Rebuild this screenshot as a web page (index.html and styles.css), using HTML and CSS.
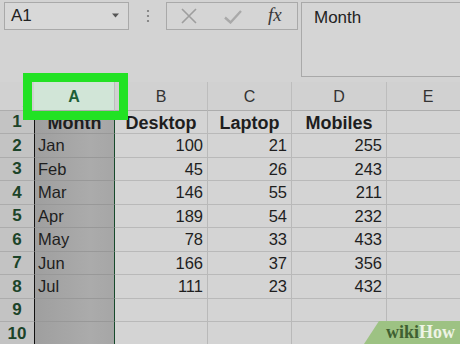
FILE: index.html
```html
<!DOCTYPE html>
<html>
<head>
<meta charset="utf-8">
<link rel="stylesheet" href="styles.css">
</head>
<body>
<div class="app">
  <div class="toolbar">
    <div class="namebox">
      <span class="ref">A1</span>
      <svg class="caret" width="7" height="5" viewBox="0 0 7 5"><path d="M0 0.5 L7 0.5 L3.5 4.5 Z" fill="#555"/></svg>
    </div>
    <div class="dots">
      <svg width="4" height="14" viewBox="0 0 4 14"><circle cx="2" cy="2" r="1.1" fill="#777"/><circle cx="2" cy="7" r="1.1" fill="#777"/><circle cx="2" cy="12" r="1.1" fill="#777"/></svg>
    </div>
    <div class="fxgroup">
      <svg class="ico-x" width="16" height="16" viewBox="0 0 16 16"><path d="M1 1 L15 15 M15 1 L1 15" stroke="#9e9e9e" stroke-width="1.6" fill="none"/></svg>
      <svg class="ico-ok" width="18" height="14" viewBox="0 0 18 14"><path d="M1 7.5 L6.5 12.5 L17 1" stroke="#a9a9a9" stroke-width="2.4" fill="none"/></svg>
      <span class="fx">fx</span>
    </div>
    <div class="formula">Month</div>
  </div>
  <div class="sheet">
    <div class="grid">
      <div class="corner"><span class="tri"></span></div>
      <div class="colh colh-sel">A</div>
      <div class="colh">B</div>
      <div class="colh">C</div>
      <div class="colh">D</div>
      <div class="colh">E</div>

      <div class="rowh">1</div>
      <div class="cell sel active b">Month<span class="handle"></span></div>
      <div class="cell b">Desktop</div>
      <div class="cell b">Laptop</div>
      <div class="cell b">Mobiles</div>
      <div class="cell"></div>

      <div class="rowh">2</div>
      <div class="cell sel">Jan</div>
      <div class="cell n">100</div>
      <div class="cell n">21</div>
      <div class="cell n">255</div>
      <div class="cell"></div>

      <div class="rowh">3</div>
      <div class="cell sel">Feb</div>
      <div class="cell n">45</div>
      <div class="cell n">26</div>
      <div class="cell n">243</div>
      <div class="cell"></div>

      <div class="rowh">4</div>
      <div class="cell sel">Mar</div>
      <div class="cell n">146</div>
      <div class="cell n">55</div>
      <div class="cell n">211</div>
      <div class="cell"></div>

      <div class="rowh">5</div>
      <div class="cell sel">Apr</div>
      <div class="cell n">189</div>
      <div class="cell n">54</div>
      <div class="cell n">232</div>
      <div class="cell"></div>

      <div class="rowh">6</div>
      <div class="cell sel">May</div>
      <div class="cell n">78</div>
      <div class="cell n">33</div>
      <div class="cell n">433</div>
      <div class="cell"></div>

      <div class="rowh">7</div>
      <div class="cell sel">Jun</div>
      <div class="cell n">166</div>
      <div class="cell n">37</div>
      <div class="cell n">356</div>
      <div class="cell"></div>

      <div class="rowh">8</div>
      <div class="cell sel">Jul</div>
      <div class="cell n">111</div>
      <div class="cell n">23</div>
      <div class="cell n">432</div>
      <div class="cell"></div>

      <div class="rowh">9</div>
      <div class="cell sel"></div>
      <div class="cell"></div>
      <div class="cell"></div>
      <div class="cell"></div>
      <div class="cell"></div>

      <div class="rowh">10</div>
      <div class="cell sel"></div>
      <div class="cell"></div>
      <div class="cell"></div>
      <div class="cell"></div>
      <div class="cell"></div>
    </div>
    <div class="highlight"></div>
    <div class="badge"><span class="wiki">wiki</span><span class="how">How</span></div>
  </div>
</div>
</body>
</html>
```

FILE: styles.css
```css
* { box-sizing: border-box; }
html, body { margin: 0; padding: 0; }
body {
  width: 460px;
  height: 344px;
  overflow: hidden;
  background: #d3d3d3;
  font-family: "Liberation Sans", Arial, sans-serif;
  color: #1e1e1e;
}
.app { width: 460px; height: 344px; overflow: hidden; }

.toolbar {
  height: 82px;
  display: flex;
  align-items: flex-start;
  padding-top: 2px;
  padding-left: 4px;
}
.namebox {
  width: 125px;
  height: 28px;
  border: 1px solid #a9a9a9;
  background: #d8d8d8;
  display: flex;
  align-items: center;
  justify-content: space-between;
  padding: 0 9px 0 6px;
}
.ref { font-size: 17px; color: #222; }
.caret { margin-top: -2px; }
.dots {
  width: 37px;
  height: 28px;
  display: flex;
  align-items: center;
  justify-content: center;
}
.fxgroup {
  width: 132px;
  height: 28px;
  border: 1px solid #a9a9a9;
  background: #d5d5d5;
  display: flex;
  align-items: center;
  padding-left: 14px;
}
.ico-x { margin-right: 27px; }
.ico-ok { margin-right: 26px; margin-top: 1px; }
.fx {
  font-family: "Liberation Serif", "Times New Roman", serif;
  font-style: italic;
  font-size: 19px;
  color: #3a3a3a;
  margin-top: -3px;
}
.formula {
  flex: 1;
  margin-left: 3px;
  margin-right: -6px;
  height: 75px;
  border: 1px solid #a9a9a9;
  background: #d5d5d5;
  font-size: 17px;
  color: #222;
  padding: 5px 0 0 12px;
}

.sheet { position: relative; height: 262px; }
.grid {
  display: grid;
  grid-template-columns: 34px 81px 93px 84px 95px 83px;
  grid-template-rows: 28.5px repeat(10, 23.5px);
  width: 470px;
}
.corner {
  position: relative;
  border-bottom: 1px solid #adadad;
  background: #d1d1d1;
}
.tri {
  position: absolute;
  right: 4px;
  bottom: 3px;
  width: 0;
  height: 0;
  border-left: 8px solid transparent;
  border-bottom: 8px solid #bdbdbd;
}
.colh {
  display: flex;
  align-items: center;
  justify-content: center;
  font-size: 16px;
  color: #333;
  background: #d1d1d1;
  border-bottom: 1px solid #adadad;
  border-right: 1px solid #bdbdbd;
  padding-top: 2px;
}
.colh-sel {
  background: #d1e5d7;
  color: #1d5e37;
  font-weight: bold;
}
.rowh {
  display: flex;
  align-items: center;
  justify-content: center;
  background: #c3c3c3;
  color: #1c4429;
  font-weight: bold;
  font-size: 17px;
  border-bottom: 1px solid #acacac;
  padding-top: 1px;
}
.cell {
  display: flex;
  align-items: center;
  font-size: 16.5px;
  color: #1e1e1e;
  border-right: 1px solid #b9b9b9;
  border-bottom: 1px solid #b9b9b9;
  padding: 1px 4px 0 4px;
  background: #d4d4d4;
}
.cell.n { justify-content: flex-end; }
.cell.b {
  font-weight: bold;
  font-size: 18px;
  justify-content: center;
  padding: 3px 0 0 0;
}
.cell.sel {
  background: linear-gradient(to right, #9f9f9f, #ababab 70%, #a6a6a6);
  border-left: 1px solid #111;
  border-right: 1px solid #174a2c;
  border-bottom: 1px solid #989898;
  padding-left: 3px;
}
.cell.active {
  position: relative;
  border-top: 1px solid #111;
  padding-left: 0;
}
.handle {
  position: absolute;
  right: -2px;
  top: 0;
  width: 4px;
  height: 4px;
  background: #1c3a26;
}

.highlight {
  position: absolute;
  left: 23px;
  top: -9px;
  width: 105px;
  height: 47px;
  border: 9px solid #22e224;
  z-index: 2;
}
.badge {
  position: absolute;
  right: 0;
  bottom: 0;
  width: 96px;
  height: 23px;
  background: #9dc283;
  clip-path: polygon(15px 0, 100% 0, 100% 100%, 0 100%);
  font-family: "Liberation Serif", "Times New Roman", serif;
  font-weight: bold;
  font-size: 18px;
  display: flex;
  align-items: center;
  justify-content: flex-end;
  padding-right: 5px;
  z-index: 4;
}
.wiki { color: #3f5f31; }
.how { color: #eef4e6; }
```
